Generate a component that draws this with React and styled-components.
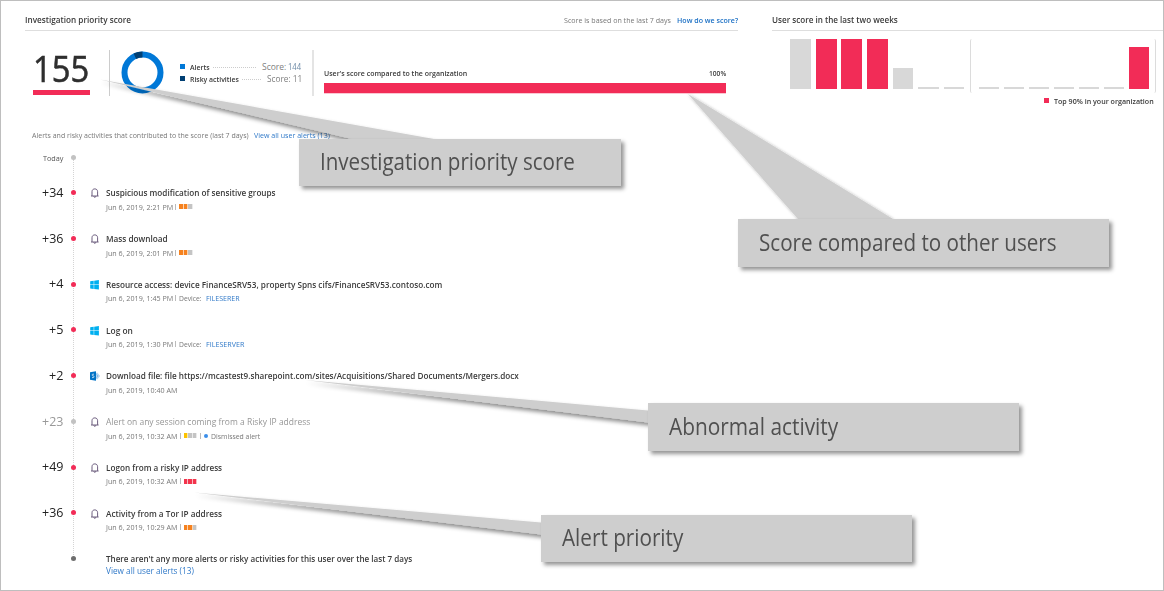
import React, { useLayoutEffect, useRef, useState } from "react";
import styled, { createGlobalStyle } from "styled-components";

const GlobalStyle = createGlobalStyle`
  *, *::before, *::after { box-sizing: border-box; }
  html, body { margin: 0; padding: 0; background: #fff; }
  body { font-family: "Open Sans", "Noto Sans", sans-serif; color: #333; overflow: hidden; }
`;

const RED = "#f22c57";
const BLUE = "#0078d7";
const NAVY = "#003f73";

const Page = styled.div`
  position: relative;
  width: 1164px;
  height: 591px;
  border: 1px solid #bebebe;
  padding: 9px 0 0 24px;
  overflow: hidden;
`;

const Columns = styled.div`
  display: flex;
  gap: 34px;
`;

const Panel = styled.section`
  width: ${(p) => p.$width}px;
  flex: none;
`;

const PanelHeader = styled.header`
  display: flex;
  align-items: center;
  height: 21px;
  border-bottom: 1px solid #dedede;
  gap: 6px;
`;

const Spacer = styled.div`
  flex: 1;
`;

const tones = {
  title: "#3a3a3a",
  muted: "#777",
  faded: "#999",
  link: "#3079c8",
  callout: "#505050",
};

const TextBox = styled.span`
  display: block;
  flex: none;
  width: ${(p) => p.$width}px;
  height: ${(p) => p.$line || 12}px;
  white-space: nowrap;
  font-size: ${(p) => p.$size}px;
  line-height: ${(p) => p.$line || 12}px;
  font-weight: ${(p) => p.$weight};
  color: ${(p) => tones[p.$tone] || p.$tone};
`;

const Run = styled.span`
  display: inline-block;
  transform-origin: 0 50%;
`;

/* Condenses or widens a single line of text so that it fills a fixed measure. */
function Text({ children, w, size = 8, line, weight = 400, tone = "title" }) {
  const ref = useRef(null);
  const [scale, setScale] = useState(1);
  useLayoutEffect(() => {
    setScale(w / ref.current.offsetWidth);
  }, [w]);
  return (
    <TextBox $width={w} $size={size} $line={line} $weight={weight} $tone={tone}>
      <Run ref={ref} style={{ transform: `scaleX(${scale})` }}>{children}</Run>
    </TextBox>
  );
}

const Summary = styled.div`
  display: flex;
  padding: 19px 0 0 8px;
  height: 70px;
`;

const ScoreBlock = styled.div`
  width: 77px;
  height: 46px;
  border-right: 1px solid #ccc;
`;

const ScoreValue = styled.div`
  height: 40px;
  -webkit-text-stroke: 0.6px #2e2e2e;
`;

const ScoreUnderline = styled.div`
  width: 57px;
  height: 5px;
  background: ${RED};
`;

const DonutSlot = styled.div`
  width: 70px;
  padding: 1px 0 0 11px;
  svg { display: block; }
`;

const Legend = styled.div`
  width: 134px;
  height: 46px;
  padding-top: 11px;
  border-right: 2px solid #e4e4e4;
`;

const LegendRow = styled.div`
  display: flex;
  align-items: center;
  width: 121.5px;
  height: 12px;
`;

const Swatch = styled.i`
  flex: none;
  width: 5px;
  height: 5px;
  margin: -1px 5px 0 0;
  background: ${(p) => p.$color};
`;

const Leader = styled.i`
  flex: 1;
  height: 1px;
  margin: 0 5px 0 3px;
  background: repeating-linear-gradient(90deg, #ccc 0 1px, transparent 1px 2px);
`;

const LegendScore = styled.div`
  display: flex;
  gap: 2px;
`;

const Compare = styled.div`
  width: 402px;
  margin-left: 10.4px;
  padding-top: 17px;
`;

const CompareHead = styled.div`
  display: flex;
  justify-content: space-between;
`;

const Track = styled.div`
  height: 10px;
  margin-top: 4px;
  background: ${RED};
  box-shadow: 0 1px 0 #fbc6d2;
`;

const Chart = styled.div`
  display: flex;
  height: 54px;
  margin: 8px 0 0 18.25px;
`;

const Week = styled.div`
  display: flex;
  align-items: flex-end;
  gap: ${(p) => p.$gap}px;
  height: 50px;
`;

const Bar = styled.div`
  width: ${(p) => p.$width}px;
  height: ${(p) => p.$height}px;
  background: ${(p) => (p.$hot ? RED : "#d8d8d8")};
`;

const WeekFrame = styled.div`
  width: 186px;
  height: 54px;
  margin-left: 6px;
  padding-left: 7.2px;
  border: solid #dcdcdc;
  border-width: 0 1px;
  border-radius: 2px;
`;

const ChartKey = styled.div`
  display: flex;
  align-items: center;
  margin: 2px 0 0 272px;
`;

const Intro = styled.div`
  display: flex;
  gap: 5px;
  padding: 28px 0 0 7px;
`;

const Timeline = styled.div`
  margin-top: 11px;
  background: repeating-linear-gradient(180deg, #d4d4d4 0 1px, transparent 1px 2px) 48px 8px / 1px 396px no-repeat;
`;

const Entry = styled.article`
  display: flex;
  align-items: flex-start;
  height: ${(p) => p.$height || 45.75}px;
`;

const Gutter = styled.div`
  display: flex;
  justify-content: flex-end;
  align-items: center;
  width: 38.5px;
  height: 12px;
`;

const Dot = styled.i`
  flex: none;
  width: 5px;
  height: 5px;
  margin: 3.3px 0 0 7.3px;
  border-radius: 50%;
  background: ${(p) => p.$color};
`;

const IconSlot = styled.div`
  width: 14px;
  height: 12px;
  margin: 1.5px 0 0 14px;
  svg { display: block; }
`;

const Body = styled.div`
  padding: 0.5px 0 0 2px;
`;

const Meta = styled.div`
  display: flex;
  align-items: center;
  height: 12px;
  margin-top: 1.5px;
`;

const Separator = styled.i`
  width: 1px;
  height: 6px;
  margin: 0 3px 0 2.5px;
  background: #bbb;
`;

const Severity = styled.div`
  display: flex;
`;

const SeverityCell = styled.i`
  width: 4.5px;
  height: 5px;
  border-right: 1px solid rgba(255, 255, 255, 0.65);
  background: ${(p) => p.$color};
`;

const StatusDot = styled.i`
  width: 4px;
  height: 4px;
  margin-right: 3px;
  border-radius: 50%;
  background: #3b8eea;
`;

const DeviceLink = styled.div`
  margin-left: 4px;
`;

const Pointers = styled.svg`
  position: absolute;
  left: -1px;
  top: -1px;
  pointer-events: none;
`;

const Callout = styled.div`
  position: absolute;
  left: ${(p) => p.$x - 1}px;
  top: ${(p) => p.$y - 1}px;
  width: ${(p) => p.$w}px;
  height: ${(p) => p.$h || 48}px;
  padding: ${(p) => (p.$h === 47 ? 7 : 8)}px 0 0 21px;
  background: #cecece;
  box-shadow: 3px 3px 4px rgba(0, 0, 0, 0.42);
`;

function Bell() {
  return (
    <svg width="10" height="10" viewBox="-1 0 10 10" fill="none" stroke="#5c4c70" strokeWidth="0.9">
      <path d="M0 8h7.600M1 7.900V3.700C1 1.900 2.200.9 3.800.9S6.600 1.900 6.600 3.700v4.200M2.800 8.300c.1.700.4 1 1 1s.9-.3 1-1" />
    </svg>
  );
}

function WindowsLogo() {
  return (
    <svg width="10" height="10" viewBox="-.2 0 10 10" fill="#00b0f0">
      <path d="M0 1.300 3.500.8v3.800H0zM4 .7 8.700.1v4.500H4zM0 5.100h3.500v3.800L0 8.400zM4 5.100h4.700v4.500L4 9z" />
    </svg>
  );
}

function SharePointLogo() {
  return (
    <svg width="11" height="10" viewBox="0.300 0 11 10">
      <path d="M6 2.200 7.500 1.500 10.500 5 7.500 8.500 6 7.800z" fill="#b9d6f0" />
      <path d="M7 3.500 8.300 5 7 6.500" fill="none" stroke="#6aaae0" strokeWidth=".7" />
      <path d="M.3 1.200 6.300.2v9.600L.3 8.800z" fill="#0072c6" />
      <path d="M4.300 3.200H3.100c-.9 0-.9 1.500 0 1.600h.5c.9.1.9 1.800 0 1.800H2.300" fill="none" stroke="#fff" strokeWidth=".7" />
    </svg>
  );
}

function Donut() {
  return (
    <svg width="43" height="43" viewBox="0 0 43 43" fill="none" strokeWidth="6">
      <circle cx="21.5" cy="21.5" r="18" stroke={BLUE} />
      <path d="M13.900 5.180A18 18 0 0 1 21.500 3.500" stroke={NAVY} />
    </svg>
  );
}

const levels = {
  low: ["#fcc200", "#c4c4c4", "#c4c4c4"],
  medium: ["#f5821f", "#f5821f", "#c4c4c4"],
  high: ["#f2344c", "#f2344c", "#f2344c"],
};

const entries = [
  { score: "+34", sw: 21.5, icon: Bell, title: "Suspicious modification of sensitive groups", tw: 170, time: "Jun 6, 2019, 2:21 PM", mw: 67, level: "medium" },
  { score: "+36", sw: 21.5, icon: Bell, title: "Mass download", tw: 61.5, time: "Jun 6, 2019, 2:01 PM", mw: 67, level: "medium" },
  { score: "+4", sw: 14.5, icon: WindowsLogo, title: "Resource access: device FinanceSRV53, property Spns cifs/FinanceSRV53.contoso.com", tw: 336, time: "Jun 6, 2019, 1:45 PM", mw: 67, device: "FILESERER", dw: 33.5 },
  { score: "+5", sw: 14.5, icon: WindowsLogo, title: "Log on", tw: 27, time: "Jun 6, 2019, 1:30 PM", mw: 67, device: "FILESERVER", dw: 38.5 },
  { score: "+2", sw: 14.5, icon: SharePointLogo, title: "Download file: file https://mcastest9.sharepoint.com/sites/Acquisitions/Shared Documents/Mergers.docx", tw: 412.5, time: "Jun 6, 2019, 10:40 AM", mw: 71.5 },
  { score: "+23", sw: 21.5, icon: Bell, title: "Alert on any session coming from a Risky IP address", tw: 204, time: "Jun 6, 2019, 10:32 AM", mw: 71.5, level: "low", dismissed: true },
  { score: "+49", sw: 21.5, icon: Bell, title: "Logon from a risky IP address", tw: 116.5, time: "Jun 6, 2019, 10:32 AM", mw: 71.5, level: "high" },
  { score: "+36", sw: 21.5, icon: Bell, title: "Activity from a Tor IP address", tw: 116, time: "Jun 6, 2019, 10:29 AM", mw: 71.5, level: "medium" },
];

function TimelineEntry({ entry }) {
  const Icon = entry.icon;
  const { dismissed } = entry;
  return (
    <Entry>
      <Gutter>
        <Text w={entry.sw} size={12.2} weight={500} tone={dismissed ? "faded" : "#222"}>{entry.score}</Text>
      </Gutter>
      <Dot $color={dismissed ? "#c2c2c2" : RED} />
      <IconSlot><Icon /></IconSlot>
      <Body>
        <Text w={entry.tw} size={8.7} weight={dismissed ? 400 : 600} tone={dismissed ? "#969696" : "title"}>{entry.title}</Text>
        <Meta>
          <Text w={entry.mw} size={7.8} tone="muted">{entry.time}</Text>
          {entry.level && (
            <>
              <Separator />
              <Severity>
                {levels[entry.level].map((c, i) => <SeverityCell key={i} $color={c} />)}
              </Severity>
            </>
          )}
          {entry.device && (
            <>
              <Separator />
              <Text w={22.5} size={7.8} tone="muted">Device:</Text>
              <DeviceLink><Text w={entry.dw} size={7.8} tone="link">{entry.device}</Text></DeviceLink>
            </>
          )}
          {dismissed && (
            <>
              <Separator />
              <StatusDot />
              <Text w={49.5} size={7.8} tone="muted">Dismissed alert</Text>
            </>
          )}
        </Meta>
      </Body>
    </Entry>
  );
}

const firstWeek = [
  { h: 50 }, { h: 50, hot: true }, { h: 50, hot: true }, { h: 50, hot: true }, { h: 21 }, { h: 2 }, { h: 2 },
];
const secondWeek = [
  { h: 2 }, { h: 2 }, { h: 2 }, { h: 2 }, { h: 2 }, { h: 2 }, { h: 42, hot: true },
];

export default function App() {
  return (
    <Page>
      <GlobalStyle />
      <Columns>
        <Panel $width={713}>
          <PanelHeader>
            <Text w={105.5} size={8.6} weight={600}>Investigation priority score</Text>
            <Spacer />
            <Text w={106.5} size={7.8} tone="muted">Score is based on the last 7 days</Text>
            <Text w={61.5} size={7.6} weight={600} tone="#1a6fc4">How do we score?</Text>
          </PanelHeader>
          <Summary>
            <ScoreBlock>
              <ScoreValue>
                <Text w={56.5} size={36.5} line={36} weight={400} tone="#2e2e2e">155</Text>
              </ScoreValue>
              <ScoreUnderline />
            </ScoreBlock>
            <DonutSlot><Donut /></DonutSlot>
            <Legend>
              <LegendRow>
                <Swatch $color={BLUE} />
                <Text w={20} size={7.6} weight={600}>Alerts</Text>
                <Leader />
                <LegendScore>
                  <Text w={24} size={8.5} tone="#808080">Score:</Text>
                  <Text w={13.5} size={8.5} tone="#6d8aa6">144</Text>
                </LegendScore>
              </LegendRow>
              <LegendRow>
                <Swatch $color={NAVY} />
                <Text w={49} size={7.6} weight={600}>Risky activities</Text>
                <Leader />
                <Text w={35} size={8.5} tone="#808080">Score: 11</Text>
              </LegendRow>
            </Legend>
            <Compare>
              <CompareHead>
                <Text w={143} size={7.6} weight={600}>User's score compared to the organization</Text>
                <Text w={17.5} size={7.6} weight={600}>100%</Text>
              </CompareHead>
              <Track />
            </Compare>
          </Summary>
          <Intro>
            <Text w={217} size={7.8} tone="muted">Alerts and risky activities that contributed to the score (last 7 days)</Text>
            <Text w={75.5} size={7.8} tone="link">View all user alerts (13)</Text>
          </Intro>
          <Timeline>
            <Entry $height={34.8}>
              <Gutter><Text w={20.5} size={7.8} tone="#555">Today</Text></Gutter>
              <Dot $color="#c2c2c2" />
            </Entry>
            {entries.map((entry, i) => <TimelineEntry key={i} entry={entry} />)}
            <Entry>
              <Gutter />
              <Dot $color="#6e6e6e" />
              <IconSlot />
              <Body>
                <Text w={306} size={8.7} weight={600}>There aren't any more alerts or risky activities for this user over the last 7 days</Text>
                <Text w={88} size={8.7} tone="link">View all user alerts (13)</Text>
              </Body>
            </Entry>
          </Timeline>
        </Panel>
        <Panel $width={392}>
          <PanelHeader>
            <Text w={125.5} size={8.6} weight={600}>User score in the last two weeks</Text>
          </PanelHeader>
          <Chart>
            <Week $gap={4.9}>
              {firstWeek.map((b, i) => <Bar key={i} $width={20.7} $height={b.h} $hot={b.hot} />)}
            </Week>
            <WeekFrame>
              <Week $gap={5.05}>
                {secondWeek.map((b, i) => <Bar key={i} $width={20} $height={b.h} $hot={b.hot} />)}
              </Week>
            </WeekFrame>
          </Chart>
          <ChartKey>
            <Swatch $color={RED} />
            <Text w={100} size={7.6} weight={600}>Top 90% in your organization</Text>
          </ChartKey>
        </Panel>
      </Columns>

      <Pointers width="1164" height="591" viewBox="0 0 1164 591">
        <defs>
          <filter id="cast" x="-10%" y="-30%" width="120%" height="170%">
            <feDropShadow dx="1" dy="3" stdDeviation="2" floodColor="#000" floodOpacity=".45" />
          </filter>
          <filter id="halo" x="-10%" y="-10%" width="120%" height="120%">
            <feDropShadow dx="0" dy="0" stdDeviation="1.8" floodColor="#000" floodOpacity=".28" />
          </filter>
        </defs>
        <g fill="#cecece">
          <polygon points="100,79.5 434,139 434,141 352,141 352,139" filter="url(#cast)" />
          <polygon points="688,94 893,219 893,222 798,222 798,219" filter="url(#halo)" />
          <polygon points="305,380 648,410.5 650,410.5 650,422.5 648,422.5" filter="url(#cast)" />
          <polygon points="194,492.5 541,522.5 543,522.5 543,534.5 541,534.5" filter="url(#cast)" />
        </g>
      </Pointers>
      <Callout $x={299} $y={139} $w={322} $h={47}>
        <Text w={254.5} size={23.5} line={31} tone="callout">Investigation priority score</Text>
      </Callout>
      <Callout $x={738} $y={219} $w={371}>
        <Text w={297.5} size={23.5} line={31} tone="callout">Score compared to other users</Text>
      </Callout>
      <Callout $x={648} $y={403} $w={371}>
        <Text w={169.5} size={23.5} line={31} tone="callout">Abnormal activity</Text>
      </Callout>
      <Callout $x={541} $y={515} $w={371} $h={47}>
        <Text w={121.5} size={23.5} line={31} tone="callout">Alert priority</Text>
      </Callout>
    </Page>
  );
}
